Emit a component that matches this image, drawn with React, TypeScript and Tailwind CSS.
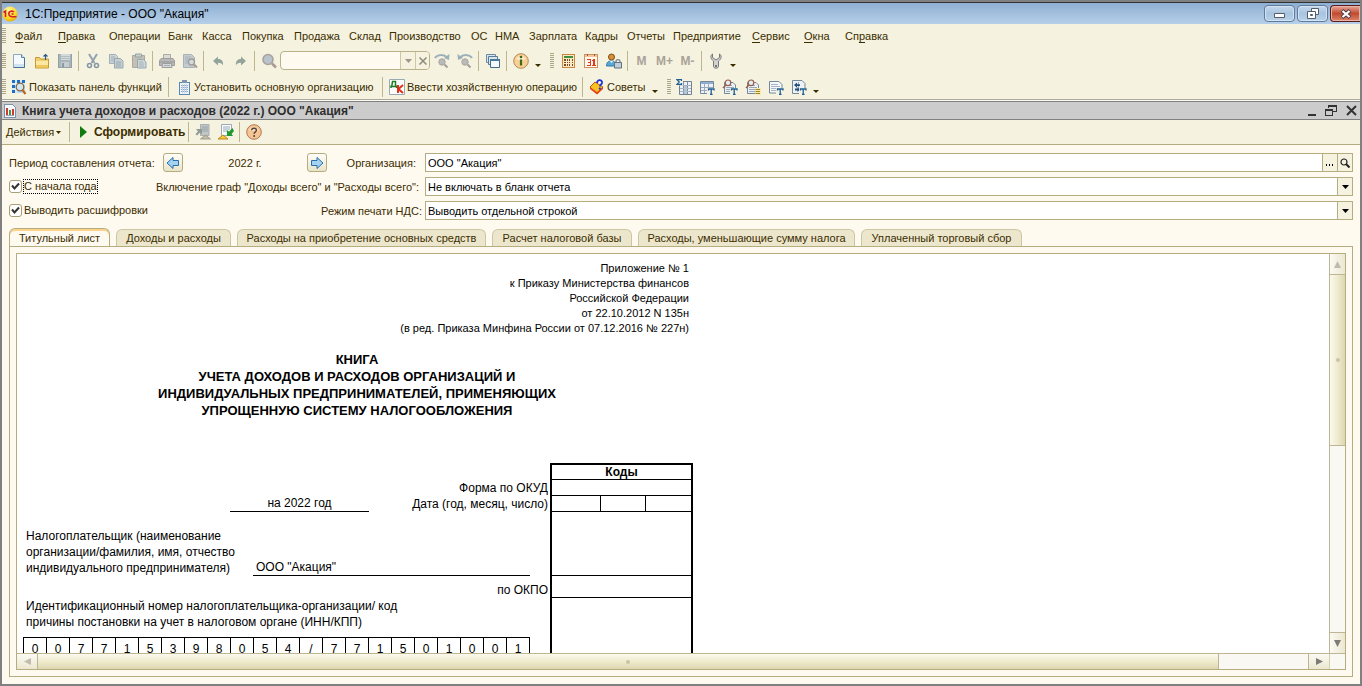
import React, { useState } from 'react';

const MENU = [
  { label: 'Файл', hot: 0, width: 'w-[43px]' },
  { label: 'Правка', hot: 0, width: 'w-[51px]' },
  { label: 'Операции', hot: -1, width: 'w-[59px]' },
  { label: 'Банк', hot: -1, width: 'w-[34px]' },
  { label: 'Касса', hot: -1, width: 'w-[40px]' },
  { label: 'Покупка', hot: -1, width: 'w-[52px]' },
  { label: 'Продажа', hot: -1, width: 'w-[55px]' },
  { label: 'Склад', hot: -1, width: 'w-[40px]' },
  { label: 'Производство', hot: -1, width: 'w-[82px]' },
  { label: 'ОС', hot: -1, width: 'w-[24px]' },
  { label: 'НМА', hot: -1, width: 'w-[34px]' },
  { label: 'Зарплата', hot: -1, width: 'w-[56px]' },
  { label: 'Кадры', hot: -1, width: 'w-[42px]' },
  { label: 'Отчеты', hot: -1, width: 'w-[46px]' },
  { label: 'Предприятие', hot: -1, width: 'w-[79px]' },
  { label: 'Сервис', hot: 0, width: 'w-[52px]' },
  { label: 'Окна', hot: 0, width: 'w-[41px]' },
  { label: 'Справка', hot: 2, width: 'w-[46px]' },
];

const TABS = [
  { label: 'Титульный лист', width: 'w-[101px]' },
  { label: 'Доходы и расходы', width: 'w-[115px]' },
  { label: 'Расходы на приобретение основных средств', width: 'w-[249px]' },
  { label: 'Расчет налоговой базы', width: 'w-[140px]' },
  { label: 'Расходы, уменьшающие сумму налога', width: 'w-[217px]' },
  { label: 'Уплаченный торговый сбор', width: 'w-[161px]' },
];

const INN_CELLS = '007715398054/771501001'.split('');

/* ---------- icons ---------- */

interface IconProps {
  children: React.ReactNode;
  crisp?: boolean;
}

const Icon: React.FC<IconProps> = ({ children, crisp }) => (
  <svg width="16" height="16" viewBox="0 0 16 16" fill="none" shapeRendering={crisp ? 'crispEdges' : 'auto'} className="shrink-0" aria-hidden="true">
    {children}
  </svg>
);

const LogoIcon = () => (
  <svg width="16" height="16" viewBox="0 0 16 16" aria-hidden="true" className="shrink-0">
    <defs>
      <radialGradient id="logo" cx="0.4" cy="0.25" r="0.8">
        <stop offset="0" stopColor="#fff7a0" />
        <stop offset="0.6" stopColor="#ffd92e" />
        <stop offset="1" stopColor="#e8a800" />
      </radialGradient>
    </defs>
    <circle cx="8" cy="8" r="7.5" fill="url(#logo)" />
    <path d="M1.5 6.5 3.5 5v6M11.8 6.200C11 4.600 6.800 4.600 6.800 7.800c0 3 2.700 3 7.700 3M11.500 8H9.500" stroke="#d8201c" strokeWidth="1.6" fill="none" />
  </svg>
);

const NewIcon = () => (
  <Icon>
    <path d="M2.5 1.5h8l3 3v10h-11z" fill="#f3f9fd" stroke="#8fa9c0" />
    <path d="M3 11h10v3H3z" fill="#cfe3f1" />
    <path d="M10.5 1.5v3h3" stroke="#5b86a8" fill="#d5e8f5" />
    <path d="M13.5 5v9.5h-11" stroke="#47739a" />
  </Icon>
);

const OpenIcon = () => (
  <Icon>
    <path d="M1.5 4.5h4l1 1.5h8v9h-13z" fill="#f2cf6a" stroke="#c89a35" />
    <path d="M2 8h12v6H2z" fill="#fce8a0" />
    <path d="M2 12h12v2.5H2z" fill="#f0c75c" />
    <path d="M11.5 7V1.5M9.5 3.5l2-2 2 2" stroke="#2c5d86" strokeWidth="1.2" />
  </Icon>
);

const SaveIcon = () => (
  <Icon crisp>
    <path d="M1 1h14v14H1z" fill="#a9b4b9" />
    <path d="M4 1h9v6H4z" fill="#d3dadb" />
    <path d="M4 3h9v1H4zM4 5h9v1H4z" fill="#b4bec2" />
    <path d="M4 9h8v6H4z" fill="#c5cdd0" />
    <path d="M5 10h2v4H5z" fill="#8999a1" />
    <path d="M1 1h1v14H1zM14 1h1v14h-1zM1 14h14v1H1z" fill="#93a1a8" />
  </Icon>
);

const CutIcon = () => (
  <Icon>
    <path d="M4 1l5.5 9M12 1 6.5 10" stroke="#93a3ae" strokeWidth="2" />
    <circle cx="4.500" cy="12.500" r="2" stroke="#8496a5" strokeWidth="1.5" />
    <circle cx="11.500" cy="12.500" r="2" stroke="#8496a5" strokeWidth="1.5" />
  </Icon>
);

const CopyIcon = () => (
  <Icon>
    <path d="M1.5 1.5h6l2 2v7h-8z" fill="#ccd5d8" stroke="#a1afb6" />
    <path d="M3 4h4M3 6h5M3 8h5" stroke="#a1afb6" />
    <path d="M6.5 5.5h6l2.5 2.5v7H6.5z" fill="#c5cfd4" stroke="#98a8b1" />
    <path d="M8 9h5M8 11h5M8 13h5" stroke="#98a8b1" />
  </Icon>
);

const PasteIcon = () => (
  <Icon>
    <path d="M1.5 2.500h12v12h-12z" fill="#c4c0b5" stroke="#aba89c" />
    <path d="M4.500 1h6v3h-6z" fill="#c9cfcf" stroke="#98a3a6" />
    <path d="M6.500 6.500h6l2.500 2.500v6H6.500z" fill="#ccd5d8" stroke="#98a8b1" />
    <path d="M8 9h4M8 11h5M8 13h5" stroke="#a6b4bb" />
  </Icon>
);

const PrintIcon = () => (
  <Icon>
    <path d="M4.500 1.500h7v4h-7z" fill="#dcdcd4" stroke="#aaaaa6" />
    <path d="M2 5.500h12l1.500 2v5H.5v-5z" fill="#bab8b4" stroke="#9f9ea2" />
    <path d="M1 9h14" stroke="#96969b" />
    <path d="M3.500 10.500h9l.5 4H3z" fill="#d5d8d6" stroke="#9a9fa2" />
    <path d="M5 12.500h6" stroke="#a8adb1" />
  </Icon>
);

const PreviewIcon = () => (
  <Icon>
    <path d="M1.500 1.500h8l3 3v10h-11z" fill="#c3ccd0" stroke="#a6b2b8" />
    <path d="M3 4h6M3 6h5M3 8h3M3 10h3" stroke="#a6b2b8" />
    <circle cx="9.500" cy="9" r="3" fill="#d3dadb" stroke="#a19b98" strokeWidth="1.300" />
    <path d="m12 11.500 3 3" stroke="#a89a94" strokeWidth="2" />
  </Icon>
);

const UndoIcon = () => (
  <Icon>
    <path d="M3 8 8 3.500V6c4 0 5.500 2.500 5 6.500-.8-2-2-2.800-5-2.800v2.800z" fill="#93a59a" />
  </Icon>
);

const RedoIcon = () => (
  <Icon>
    <path d="M13 8 8 3.500V6c-4 0-5.500 2.500-5 6.500.8-2 2-2.800 5-2.800v2.800z" fill="#93a59a" />
  </Icon>
);

const FindIcon = () => (
  <Icon>
    <circle cx="7" cy="6.500" r="5" fill="#b9c3cc" stroke="#a8a19d" strokeWidth="1.600" />
    <path d="m11 10.500 4 4" stroke="#aa9a94" strokeWidth="2.600" />
  </Icon>
);

const FindNextIcon = () => (
  <Icon>
    <path d="M1 5c2-3.500 9-4 12-.5" stroke="#9db0ba" strokeWidth="2" />
    <path d="m15.500 1-.5 6-5-2z" fill="#9db0ba" />
    <circle cx="8" cy="9" r="3.200" fill="#bababa" stroke="#a9a5a3" />
    <path d="m10.500 11.500 3 3" stroke="#a79d98" strokeWidth="2" />
  </Icon>
);

const FindPrevIcon = () => (
  <Icon>
    <path d="M15 5C13 1.500 6 1 3 4.500" stroke="#9db0ba" strokeWidth="2" />
    <path d="m.5 1 .5 6 5-2z" fill="#9db0ba" />
    <circle cx="8" cy="9" r="3.200" fill="#bababa" stroke="#a9a5a3" />
    <path d="m10.500 11.500 3 3" stroke="#a79d98" strokeWidth="2" />
  </Icon>
);

const WindowsIcon = () => (
  <Icon>
    <path d="M1.500 1.500h9v8h-9z" fill="#d9e6ee" stroke="#6c8ba3" />
    <path d="M3.500 3.500h9v8h-9z" fill="#d9e6ee" stroke="#567c98" />
    <path d="M5.500 6.500h9v8h-9z" fill="#f4f9fc" stroke="#3f6c8c" />
    <path d="M5 7h10" stroke="#4a7898" strokeWidth="2" />
  </Icon>
);

const InfoIcon = () => (
  <Icon>
    <circle cx="8" cy="8" r="7.300" fill="#f8cf94" stroke="#b58a58" />
    <path d="M3 6a5.500 4.500 0 0 1 10 0c-3 1.500-7 1.500-10 0z" fill="#fdebd0" />
    <circle cx="8" cy="4" r="1.300" fill="#3b6b14" />
    <path d="M8 6.500v6" stroke="#3b6b14" strokeWidth="2.200" />
  </Icon>
);

const HelpIcon = () => (
  <Icon>
    <circle cx="8" cy="8" r="7.300" fill="#f6c596" stroke="#b07850" />
    <path d="M3 6a5.500 4.500 0 0 1 10 0c-3 1.500-7 1.500-10 0z" fill="#fde3c8" />
    <path d="M5.700 6.200C5.700 3.500 10.400 3.500 10.400 6.200c0 1.600-2.300 1.600-2.300 3.500" stroke="#5a463a" strokeWidth="1.500" />
    <circle cx="8.100" cy="12" r="1" fill="#5a463a" />
  </Icon>
);

const CalcIcon = () => (
  <Icon crisp>
    <path d="M2.500 1.500h12v13h-12z" fill="#fbe8c4" stroke="#c8873e" />
    <path d="M4 3h9v2H4z" fill="#3f8f3c" />
    <path d="M4 6h2v2H4zM7 6h1v2H7zM9 6h1v2H9zM12 6h1v2h-1zM4 9h2v1H4zM7 9h1v1H7zM9 9h1v1H9zM12 9h1v1h-1zM4 11h2v2H4zM7 11h1v2H7zM9 11h1v2H9zM12 11h1v2h-1z" fill="#7a4b20" />
  </Icon>
);

const CalendarIcon = () => (
  <Icon crisp>
    <path d="M1.500 1.500h13v13h-13z" fill="#fff8ee" stroke="#cf9060" />
    <path d="M2 2h12v2H2z" fill="#f4c69a" />
    <path d="M4 1h1v2H4zM11 1h1v2h-1z" fill="#8a5a34" />
    <path d="M4 6h4v7H4v-1h3v-2H5V9h2V7H4zM10 6h2v6h1v1H9v-1h1V8H9V7h1z" fill="#e23a1c" />
  </Icon>
);

const UserIcon = () => (
  <Icon>
    <circle cx="5.500" cy="4" r="3" fill="#d99036" stroke="#7c4c1c" />
    <path d="M.5 13c0-4 2-5 5-5s4 1 4.500 5z" fill="#58a9d8" stroke="#2f79a8" />
    <path d="m4 8 1.500 2L7 8z" fill="#fff" />
    <path d="M10 10V8.500c0-2.500 4-2.500 4 0V10" stroke="#76858f" strokeWidth="1.300" />
    <path d="M8.500 9.500h7v5.500h-7z" fill="#c4ced6" stroke="#5f7280" />
  </Icon>
);

const WrenchIcon = () => (
  <Icon>
    <path d="M4.500 1v3.500L8 7l3.500-2.500V1C14 2.500 13.500 6 10.500 8v5.500c0 2.200-5 2.200-5 0V8C2.500 6 2 2.500 4.500 1z" fill="#d2d2d0" stroke="#77777a" />
    <circle cx="8" cy="13" r="1" fill="#555" />
  </Icon>
);

const PanelIcon = () => (
  <Icon>
    <path d="M1 1h13v13H1z" fill="#bcdcf5" />
    <path d="M1 1h3v3H1zM6 1h3v3H6zM11 1h3v3h-3zM1 6h3v3H1zM1 11h3v3H1z" fill="#1c6fc4" />
    <path d="M1 5h13M1 10h5M5 1v13M10 1v4" stroke="#f3f9ff" />
    <circle cx="9" cy="8" r="3.800" fill="#cfe6ee" stroke="#8a6440" strokeWidth="1.300" />
    <path d="m11.500 11 3 4" stroke="#b86a20" strokeWidth="2.200" />
  </Icon>
);

const OrgIcon = () => (
  <Icon crisp>
    <path d="M3 3h11v13H3z" fill="#5f86ad" />
    <path d="M4 4h9v11H4z" fill="#eef4fb" />
    <path d="M6 1h5v3H6z" fill="#7d96ae" />
    <path d="M5 6h7v1H5zM5 8h7v1H5zM5 10h7v1H5zM5 12h7v1H5z" fill="#8eaac6" />
    <path d="M6 5h1v9H6zM8 5h1v9H8zM10 5h1v9h-1z" fill="#c3d3e4" />
  </Icon>
);

const DkIcon = () => (
  <Icon>
    <path d="M.5.5h15v15H.5z" fill="#fff" stroke="#9aa9b5" />
    <path d="M2 9V7.200h.8L3.500 2.500h3v4.700h1V9M2 7.500h5.500" stroke="#1d7d27" strokeWidth="1.500" />
    <path d="M9 6v8M14 6l-4.500 4L14 14" stroke="#e3301c" strokeWidth="2" />
  </Icon>
);

const TipsIcon = () => (
  <Icon>
    <path d="M1 8 6 3l8 5-6 7z" fill="#f7c222" stroke="#b8590e" />
    <path d="m1 8 7 5v2.500L1 10zM8 13l6-5v2l-6 5.500z" fill="#e2471c" />
    <path d="M8 4c0-4 5.500-3.500 5 0-.3 1.500-2 1.500-2 3.500" stroke="#1a30d8" strokeWidth="1.800" />
    <circle cx="10.800" cy="9.600" r="1.100" fill="#1a30d8" />
  </Icon>
);

const SheetBase = () => (
  <>
    <path d="M2.500 3.500h8.500l2.500 2.500v8.500h-11z" fill="#eef2f6" stroke="#75879b" />
    <path d="M4 6.500h6M4 8.500h8M4 10.500h8M4 12.500h8" stroke="#9aa9ba" />
  </>
);

const LetterT = () => (
  <>
    <path d="M8 9h8v7H8z" fill="#f5f2df" />
    <path d="M9.500 11.500v-1.500h5.500v1.500M12.200 10v5.500M11 15.500h2.600" stroke="#1f5f96" strokeWidth="1.300" />
  </>
);

const Lens = () => (
  <>
    <circle cx="6" cy="3.800" r="2.800" fill="#e3eff5" stroke="#9a5c46" strokeWidth="1.200" />
    <path d="M4 6 1 9" stroke="#9a5c46" strokeWidth="1.500" />
  </>
);

const SumIcon = () => (
  <Icon>
    <path d="M3.500 2.500h12v13h-12z" fill="#eef2f6" stroke="#6f8296" />
    <path d="M7.500 3v12M11.500 3v12" stroke="#7f92a6" />
    <path d="M4 6.500h11M4 9.500h11M4 12.500h11" stroke="#a5b3c2" />
    <path d="M8 7h3v8H8z" fill="#b7c4d2" />
    <path d="M0 0h7v6.500H0z" fill="#f5f2df" />
    <path d="M5.500 2V.6H1L3.300 3 1 5.400h4.500V4" stroke="#1f5f96" strokeWidth="1.200" />
  </Icon>
);

const TableTIcon = () => (
  <Icon>
    <path d="M1.500 2.500h13v12h-13z" fill="#eef2f6" stroke="#75879b" />
    <path d="M2 4h12" stroke="#8fb0d0" strokeWidth="2" />
    <path d="M5.500 4v10M9.500 4v10M2 8.500h12M2 11.500h12" stroke="#9aa9ba" />
    <LetterT />
  </Icon>
);

const LensTIcon = () => (
  <Icon>
    <SheetBase />
    <Lens />
    <LetterT />
  </Icon>
);

const LensListIcon = () => (
  <Icon>
    <SheetBase />
    <Lens />
    <path d="M10 9h6v7h-6z" fill="#f5e9b0" />
    <path d="M10.500 10.500H15M10.500 12.500H15M10.500 14.500H15" stroke="#a08a20" />
  </Icon>
);

const TextTIcon = () => (
  <Icon>
    <path d="M1.500 2.500h9.500l3 3v8.500h-12.500z" fill="#f6f8fa" stroke="#75879b" />
    <path d="M3 5.500h7M3 7.500h9M3 9.500h6M3 11.500h5" stroke="#a9b5c2" />
    <LetterT />
  </Icon>
);

const ArrowsTIcon = () => (
  <Icon>
    <path d="M1.500 1.500h9.500l3 3v10h-12.500z" fill="#eef2f6" stroke="#75879b" />
    <path d="M7.500 3v9" stroke="#9aa9ba" />
    <path d="m3 6 3-2.500v1.700h3V7H6v1.700zM9 10.500 6.500 8v1.500H4v2h2.500V13z" fill="#1f4f7c" />
    <LetterT />
  </Icon>
);

const ReportIcon = () => (
  <svg width="12" height="14" viewBox="0 0 12 14" shapeRendering="crispEdges" className="shrink-0" aria-hidden="true">
    <path d="M.5.5h8l3 3v10H.5z" fill="#f4f8fb" stroke="#7e93a8" />
    <path d="M2 4h2v7H2z" fill="#cc3a30" />
    <path d="M5 6h2v5H5z" fill="#3f9a48" />
    <path d="M8 5h2v6H8z" fill="#cc3a30" />
    <path d="M2 11h8v1H2z" fill="#9aa6b2" />
  </svg>
);

const RestoreSettingsIcon = () => (
  <Icon>
    <path d="M5.500.5h8.500v11H5.500z" fill="#c2c7c7" stroke="#a8afb1" />
    <path d="M7 3h6M7 5h6M7 7h6" stroke="#98a2a6" />
    <path d="M1 5h6v5.500L5 8.500l-3 3L.500 10 3 7.500z" fill="#8f9b93" />
    <path d="m5.500 15 5-4 5 4z" fill="#c3bda8" stroke="#a29d8b" />
  </Icon>
);

const SaveSettingsIcon = () => (
  <Icon>
    <path d="M3.500.5h10v11h-10z" fill="#fafcfd" stroke="#9aaab8" />
    <path d="M5 3h7M5 5h7M5 7h4" stroke="#98a8b6" />
    <path d="M14.500 4 11 7.500 9 6v6h6l-1.500-2 2.500-3z" fill="#1f9a2c" />
    <path d="m0 15 5-4 5 4z" fill="#f5c93a" stroke="#b98a1c" />
  </Icon>
);

const ArrowLeftIcon = () => (
  <svg width="14" height="14" viewBox="0 0 14 14" aria-hidden="true">
    <path d="M1 7 7 1.500v3h5.500v5H7v3z" fill="#a4d2f2" stroke="#2b6ea8" strokeLinejoin="round" />
  </svg>
);

const ArrowRightIcon = () => (
  <svg width="14" height="14" viewBox="0 0 14 14" aria-hidden="true">
    <path d="M13 7 7 1.500v3H1.500v5H7v3z" fill="#a4d2f2" stroke="#2b6ea8" strokeLinejoin="round" />
  </svg>
);

const SmallArrow: React.FC<{ className?: string }> = ({ className = 'text-black' }) => (
  <svg width="7" height="4" viewBox="0 0 7 4" className={`shrink-0 ${className}`} aria-hidden="true">
    <path d="M0 0h7L3.500 4z" fill="currentColor" />
  </svg>
);

/* ---------- toolbar parts ---------- */

const Separator = () => (
  <div className="w-[5px] flex justify-center shrink-0">
    <div className="w-px h-5 bg-[#bdb68e]" />
  </div>
);

const Grip = () => (
  <div className="w-1 h-4 shrink-0 bg-[repeating-linear-gradient(#aaa687_0_1px,transparent_1px_2px)]" />
);

const More = () => (
  <button type="button" aria-label="Еще" className="w-3 h-5 flex items-end justify-center pb-1 shrink-0">
    <svg width="6" height="3" viewBox="0 0 6 3" aria-hidden="true"><path d="M0 0h6L3 3z" fill="#3b2d00" /></svg>
  </button>
);

const ToolButton: React.FC<{ title: string; children: React.ReactNode; disabled?: boolean }> = ({ title, children, disabled }) => (
  <button type="button" title={title} aria-label={title} disabled={disabled} className="w-[23px] h-6 flex items-center justify-center shrink-0">
    {children}
  </button>
);

const MemoryButton: React.FC<{ label: string }> = ({ label }) => (
  <button type="button" disabled className="w-[23px] h-6 text-xs font-bold text-[#a9a298] shrink-0 whitespace-nowrap">{label}</button>
);

const TextButton: React.FC<{ label: string; width: string; children: React.ReactNode }> = ({ label, width, children }) => (
  <button type="button" className={`${width} h-6 flex items-center gap-[2px] shrink-0 whitespace-nowrap`}>
    {children}
    {label}
  </button>
);

const TitleBar = () => (
  <header className="h-[22px] border-t border-[#333] bg-linear-to-b from-[#8fafd1] to-[#b6cfe9] flex items-center">
    <LogoIcon />
    <h1 className="ml-[7px] text-xs text-black flex-1 whitespace-nowrap">1С:Предприятие - ООО "Акация"</h1>
    <div className="flex gap-[2px]">
      <button type="button" aria-label="Свернуть" className="w-[31px] h-[17px] rounded-sm border border-[#5f7a9c] bg-linear-to-b from-[#c5d8ec] via-[#a9c4df] to-[#b9d2ea] flex items-center justify-center shadow-[inset_0_0_0_1px_#d5e4f3]">
        <svg width="11" height="5" viewBox="0 0 11 5" className="mt-1"><path d="M.5.5h10v4H.5z" fill="#fff" stroke="#555c6b" /></svg>
      </button>
      <button type="button" aria-label="Восстановить" className="w-[31px] h-[17px] rounded-sm border border-[#5f7a9c] bg-linear-to-b from-[#c5d8ec] via-[#a9c4df] to-[#b9d2ea] flex items-center justify-center shadow-[inset_0_0_0_1px_#d5e4f3]">
        <svg width="12" height="11" viewBox="0 0 12 11">
          <path d="M4.500.5h7v6h-7z" fill="#fff" stroke="#555c6b" />
          <path d="M.5 3.500h8v7h-8z" fill="#fff" stroke="#555c6b" />
          <path d="M3.500 6.500h2v1h-2z" fill="#7791ae" stroke="#555c6b" />
        </svg>
      </button>
      <button type="button" aria-label="Закрыть" className="w-[30px] h-[17px] rounded-l-sm border border-r-0 border-[#5c1a18] bg-linear-to-b from-[#e6a699] via-[#c04a30] to-[#dd8468] flex items-center justify-center shadow-[inset_0_0_0_1px_#e9b4a8]">
        <svg width="12" height="10" viewBox="0 0 12 10">
          <path d="M2 1.500 10 8.500M10 1.500 2 8.500" stroke="#4f3a42" strokeWidth="4" />
          <path d="M2.500 2 9.500 8M9.500 2 2.500 8" stroke="#fff" strokeWidth="2.200" />
        </svg>
      </button>
    </div>
  </header>
);

const MenuBar = () => (
  <nav className="h-6 flex items-center">
    <Grip />
    <div className="flex pl-[9px]">
      {MENU.map(({ label, hot, width }) => (
        <button key={label} type="button" className={`${width} text-left whitespace-nowrap`}>
          {hot < 0 ? label : (
            <>
              {label.slice(0, hot)}
              <u className="underline-offset-2">{label[hot]}</u>
              {label.slice(hot + 1)}
            </>
          )}
        </button>
      ))}
    </div>
  </nav>
);

const MainToolbar = () => (
  <div className="h-[25px] flex items-center">
    <Grip />
    <div className="w-px" />
    <ToolButton title="Новый"><NewIcon /></ToolButton>
    <ToolButton title="Открыть"><OpenIcon /></ToolButton>
    <ToolButton title="Сохранить" disabled><SaveIcon /></ToolButton>
    <Separator />
    <ToolButton title="Вырезать" disabled><CutIcon /></ToolButton>
    <ToolButton title="Копировать" disabled><CopyIcon /></ToolButton>
    <ToolButton title="Вставить" disabled><PasteIcon /></ToolButton>
    <Separator />
    <ToolButton title="Печать" disabled><PrintIcon /></ToolButton>
    <ToolButton title="Просмотр" disabled><PreviewIcon /></ToolButton>
    <Separator />
    <ToolButton title="Отменить" disabled><UndoIcon /></ToolButton>
    <ToolButton title="Повторить" disabled><RedoIcon /></ToolButton>
    <Separator />
    <ToolButton title="Найти" disabled><FindIcon /></ToolButton>
    <div className="w-[150px] h-[19px] flex border border-[#b9b18a] rounded-sm bg-[#fffaf0] overflow-hidden shrink-0">
      <input type="text" aria-label="Поиск" className="w-[119px] outline-none px-1" />
      <button type="button" aria-label="История поиска" className="w-[15px] border-l border-[#cdc7a4] bg-[#f5f2df] flex items-center justify-center">
        <SmallArrow className="text-[#9b9688]" />
      </button>
      <button type="button" aria-label="Очистить" className="w-[14px] border-l border-[#cdc7a4] bg-[#f5f2df] flex items-center justify-center">
        <svg width="8" height="8" viewBox="0 0 8 8"><path d="m.5.5 7 7M7.500.5l-7 7" stroke="#8f8a7a" strokeWidth="1.500" /></svg>
      </button>
    </div>
    <ToolButton title="Найти следующий" disabled><FindNextIcon /></ToolButton>
    <ToolButton title="Найти предыдущий" disabled><FindPrevIcon /></ToolButton>
    <Separator />
    <ToolButton title="Окна"><WindowsIcon /></ToolButton>
    <Separator />
    <ToolButton title="Справка"><InfoIcon /></ToolButton>
    <More />
    <div className="w-[6px]" />
    <Grip />
    <div className="w-[2px]" />
    <ToolButton title="Калькулятор"><CalcIcon /></ToolButton>
    <ToolButton title="Календарь"><CalendarIcon /></ToolButton>
    <ToolButton title="Пользователь"><UserIcon /></ToolButton>
    <Separator />
    <MemoryButton label="M" />
    <MemoryButton label="M+" />
    <MemoryButton label="M-" />
    <Separator />
    <ToolButton title="Настройки"><WrenchIcon /></ToolButton>
    <More />
  </div>
);

const CommandToolbar = () => (
  <div className="h-[26px] pt-px flex items-center">
    <Grip />
    <div className="w-[5px]" />
    <TextButton label="Показать панель функций" width="w-[155px]"><PanelIcon /></TextButton>
    <Separator />
    <div className="w-[5px]" />
    <TextButton label="Установить основную организацию" width="w-[204px]"><OrgIcon /></TextButton>
    <Separator />
    <div className="w-1" />
    <TextButton label="Ввести хозяйственную операцию" width="w-[191px]"><DkIcon /></TextButton>
    <Separator />
    <div className="w-1" />
    <TextButton label="Советы" width="w-[60px]"><TipsIcon /></TextButton>
    <More />
    <div className="w-[6px]" />
    <Grip />
    <div className="w-px" />
    <ToolButton title="Итоги"><SumIcon /></ToolButton>
    <ToolButton title="Таблица"><TableTIcon /></ToolButton>
    <ToolButton title="Найти текст"><LensTIcon /></ToolButton>
    <ToolButton title="Найти в списке"><LensListIcon /></ToolButton>
    <ToolButton title="Текст"><TextTIcon /></ToolButton>
    <ToolButton title="Обмен"><ArrowsTIcon /></ToolButton>
    <More />
  </div>
);

const ReportTitle = () => (
  <div className="h-[19px] mt-px border-t border-b border-[#808080] bg-[#cccccc] flex items-center pl-[2px] pr-[3px] text-[#2e2e2e] shrink-0">
    <ReportIcon />
    <h2 className="ml-[6px] flex-1 text-xs font-bold whitespace-nowrap">Книга учета доходов и расходов (2022 г.) ООО "Акация"</h2>
    <div className="flex items-center gap-[9px]">
      <button type="button" aria-label="Свернуть окно">
        <svg width="9" height="11" viewBox="0 0 9 11"><path d="M1 9h8v2H1z" fill="#333" /></svg>
      </button>
      <button type="button" aria-label="Восстановить окно">
        <svg width="12" height="11" viewBox="0 0 12 11" fill="none" shapeRendering="crispEdges">
          <path d="M3.500 3V.5h8v6H8M3 1h9" stroke="#333" />
          <path d="M.5 4.500h7v6h-7zM0 5h8" stroke="#333" />
        </svg>
      </button>
      <button type="button" aria-label="Закрыть окно">
        <svg width="11" height="11" viewBox="0 0 11 11"><path d="m1 1 9 9M10 1l-9 9" stroke="#333" strokeWidth="2" /></svg>
      </button>
    </div>
  </div>
);

const ReportToolbar = () => (
  <div className="h-[25px] border-b border-[#b5ac80] flex items-center bg-[#f5f2df] shrink-0">
    <button type="button" className="w-[65px] pl-1 flex items-center gap-[2px] whitespace-nowrap">
      Действия
      <svg width="5" height="3" viewBox="0 0 5 3" aria-hidden="true"><path d="M0 0h5L2.500 3z" fill="#3b2d00" /></svg>
    </button>
    <Separator />
    <button type="button" className="w-[114px] pl-2 flex items-center gap-[7px] text-xs font-bold whitespace-nowrap">
      <svg width="7" height="12" viewBox="0 0 7 12" className="shrink-0" aria-hidden="true"><path d="M0 0v12l7-6z" fill="#107c10" /></svg>
      Сформировать
    </button>
    <Separator />
    <ToolButton title="Восстановить настройки" disabled><RestoreSettingsIcon /></ToolButton>
    <ToolButton title="Сохранить настройки"><SaveSettingsIcon /></ToolButton>
    <Separator />
    <ToolButton title="Помощь"><HelpIcon /></ToolButton>
  </div>
);

/* ---------- form ---------- */

const PeriodButton: React.FC<{ title: string; onClick: () => void; children: React.ReactNode }> = ({ title, onClick, children }) => (
  <button
    type="button"
    aria-label={title}
    onClick={onClick}
    className="w-5 h-[19px] rounded-[3px] border border-[#b5ac80] bg-linear-to-b from-[#fffef8] to-[#e9e4c8] flex items-center justify-center"
  >
    {children}
  </button>
);

const CheckField: React.FC<{ id: string; label: string; focused?: boolean }> = ({ id, label, focused }) => {
  const [checked, setChecked] = useState(true);
  return (
    <div className="flex items-center gap-px">
      <span className="grid place-items-center">
        <input
          id={id}
          type="checkbox"
          checked={checked}
          onChange={(e) => setChecked(e.target.checked)}
          className="appearance-none w-[13px] h-[13px] border border-[#a99f74] rounded-[3px] bg-white col-start-1 row-start-1"
        />
        {checked && (
          <svg width="9" height="9" viewBox="0 0 9 9" fill="none" className="col-start-1 row-start-1 pointer-events-none" aria-hidden="true">
            <path d="M1 3.500 3.500 6.500 8 1.500" stroke="#333" strokeWidth="2" />
          </svg>
        )}
      </span>
      <label htmlFor={id} className={`border leading-[13px] whitespace-nowrap ${focused ? 'border-dotted border-black' : 'border-transparent'}`}>{label}</label>
    </div>
  );
};

const SelectField: React.FC<{ id: string; options: string[] }> = ({ id, options }) => (
  <div className="h-[19px] flex-1 grid border border-[#b5ac80] bg-white text-black">
    <select id={id} className="appearance-none col-start-1 row-start-1 px-[2px] outline-none">
      {options.map((option) => <option key={option}>{option}</option>)}
    </select>
    <span className="col-start-1 row-start-1 justify-self-end w-[15px] border-l border-[#b5ac80] bg-[#f5f2df] flex items-center justify-center pointer-events-none">
      <SmallArrow />
    </span>
  </div>
);

const ReportForm = () => {
  const [year, setYear] = useState(2022);
  const [company, setCompany] = useState('ООО "Акация"');

  return (
    <form className="px-[7px] pt-2 flex flex-col gap-[5px]" onSubmit={(e) => e.preventDefault()}>
      <div className="flex items-center">
        <div className="w-[416px] flex items-center shrink-0">
          <span className="w-[154px] whitespace-nowrap">Период составления отчета:</span>
          <PeriodButton title="Предыдущий год" onClick={() => setYear(year - 1)}><ArrowLeftIcon /></PeriodButton>
          <output className="w-[124px] text-center">{year} г.</output>
          <PeriodButton title="Следующий год" onClick={() => setYear(year + 1)}><ArrowRightIcon /></PeriodButton>
          <label htmlFor="company" className="ml-auto pr-[9px]">Организация:</label>
        </div>
        <div className="h-[19px] flex-1 flex border border-[#b5ac80] bg-white text-black">
          <input id="company" type="text" value={company} onChange={(e) => setCompany(e.target.value)} className="flex-1 min-w-0 px-[2px] outline-none" />
          <button type="button" aria-label="Выбрать" className="w-[15px] border-l border-[#b5ac80] bg-[#f5f2df] flex items-center justify-center">
            <svg width="8" height="6" viewBox="0 0 8 6" shapeRendering="crispEdges"><path d="M0 4h1v2H0zM3 4h1v2H3zM6 4h1v2H6z" fill="#000" /></svg>
          </button>
          <button type="button" aria-label="Открыть" className="w-[15px] border-l border-[#b5ac80] bg-[#f5f2df] flex items-center justify-center">
            <svg width="10" height="10" viewBox="0 0 10 10" fill="none">
              <circle cx="4" cy="4" r="3" stroke="#222" strokeWidth="1.200" />
              <path d="m6 6 3.500 3.500" stroke="#222" strokeWidth="2" />
            </svg>
          </button>
        </div>
      </div>
      <div className="flex items-center">
        <div className="w-[416px] flex items-center justify-between pr-[6px] shrink-0">
          <CheckField id="from-start" label="С начала года" focused />
          <label htmlFor="columns" className="whitespace-nowrap">Включение граф "Доходы всего" и "Расходы всего":</label>
        </div>
        <SelectField id="columns" options={['Не включать в бланк отчета', 'Включать в бланк отчета']} />
      </div>
      <div className="flex items-center">
        <div className="w-[416px] flex items-center justify-between pr-[3px] shrink-0">
          <CheckField id="details" label="Выводить расшифровки" />
          <label htmlFor="vat" className="whitespace-nowrap">Режим печати НДС:</label>
        </div>
        <SelectField id="vat" options={['Выводить отдельной строкой', 'Не выводить']} />
      </div>
    </form>
  );
};

/* ---------- printed sheet ---------- */

const Sheet = () => (
  <article className="w-[676px] text-xs leading-4 text-black">
    <div className="pt-[7px] pr-1 text-right text-[11px] leading-[15px]">
      <p>Приложение № 1</p>
      <p>к Приказу Министерства финансов</p>
      <p>Российской Федерации</p>
      <p>от 22.10.2012 N 135н</p>
      <p>(в ред. Приказа Минфина России от 07.12.2016 № 227н)</p>
    </div>
    <h3 className="w-[680px] pt-[15px] text-center text-[13px] leading-[17px] font-bold">
      КНИГА<br />
      УЧЕТА ДОХОДОВ И РАСХОДОВ ОРГАНИЗАЦИЙ И<br />
      ИНДИВИДУАЛЬНЫХ ПРЕДПРИНИМАТЕЛЕЙ, ПРИМЕНЯЮЩИХ<br />
      УПРОЩЕННУЮ СИСТЕМУ НАЛОГООБЛОЖЕНИЯ
    </h3>
    <div className="mt-11 flex">
      <div className="w-[533px] pt-[17px]">
        <p className="pr-[2px] text-right">Форма по ОКУД</p>
        <div className="h-4 flex pl-[213px] pr-[2px] justify-between">
          <p className="w-[139px] leading-[15px] text-center border-b border-black">на 2022 год</p>
          <p>Дата (год, месяц, число)</p>
        </div>
        <div className="pt-4 pl-[9px] flex items-end">
          <p className="w-[227px]">
            Налогоплательщик (наименование<br />
            организации/фамилия, имя, отчество<br />
            индивидуального предпринимателя)
          </p>
          <p className="w-[277px] pl-[3px] leading-[15px] border-b border-black">ООО "Акация"</p>
        </div>
        <p className="pr-[2px] pt-[6px] text-right">по ОКПО</p>
        <p className="pl-[9px]">
          Идентификационный номер налогоплательщика-организации/ код<br />
          причины постановки на учет в налоговом органе (ИНН/КПП)
        </p>
        <table className="mt-[7px] ml-[6px] w-[507px] table-fixed border-collapse">
          <tbody>
            <tr className="h-[23px]">
              {INN_CELLS.map((cell, i) => (
                <td key={i} className="border border-black p-0 text-center">{cell}</td>
              ))}
            </tr>
          </tbody>
        </table>
      </div>
      <table className="w-[143px] table-fixed border-collapse border-2 border-black">
        <colgroup>
          <col className="w-[49px]" />
          <col className="w-[45px]" />
          <col />
        </colgroup>
        <thead>
          <tr className="h-[15px]">
            <th colSpan={3} className="p-0 leading-[14px] font-bold border border-black">Коды</th>
          </tr>
        </thead>
        <tbody>
          <tr className="h-4"><td colSpan={3} className="p-0 border border-black" /></tr>
          <tr className="h-4">
            <td className="p-0 border border-black" />
            <td className="p-0 border border-black" />
            <td className="p-0 border border-black" />
          </tr>
          <tr className="h-16"><td colSpan={3} className="p-0 border border-black" /></tr>
          <tr className="h-[22px]"><td colSpan={3} className="p-0 border border-black" /></tr>
          <tr><td colSpan={3} className="p-0 border border-black" /></tr>
        </tbody>
      </table>
    </div>
  </article>
);

const VerticalScroll = () => (
  <div className="w-4 border-l border-[#bdb594] bg-[#faf8f2] flex flex-col shrink-0">
    <button type="button" aria-label="Вверх" className="h-5 border-b border-[#bdb594] bg-linear-to-r from-[#fbfaf3] to-[#ebe7cf] flex items-center justify-center box-content">
      <svg width="7" height="7" viewBox="0 0 7 7"><path d="M3.500 0 7 7H0z" fill="#bfbcae" /></svg>
    </button>
    <div className="flex-1 flex flex-col">
      <div className="h-[48%] border-b border-[#bdb594] bg-linear-to-r from-[#fbf9ee] via-[#efebcd] to-[#ddd6b0] flex items-center justify-center">
        <span className="w-1 h-1 rounded-full bg-[#c9c3a5]" />
      </div>
    </div>
    <button type="button" aria-label="Вниз" className="h-5 border-t border-[#bdb594] bg-linear-to-r from-[#fbfaf3] to-[#ebe7cf] flex items-center justify-center box-content">
      <svg width="7" height="7" viewBox="0 0 7 7"><path d="M0 0h7L3.500 7z" fill="#7c7b76" /></svg>
    </button>
  </div>
);

const HorizontalScroll = () => (
  <div className="h-4 border-t border-[#bdb594] bg-[#faf8f2] flex shrink-0">
    <button type="button" aria-label="Влево" className="w-5 border-r border-[#bdb594] bg-linear-to-b from-[#fbfaf3] to-[#ebe7cf] flex items-center justify-center box-content">
      <svg width="7" height="7" viewBox="0 0 7 7"><path d="M7 0v7L0 3.500z" fill="#bfbcae" /></svg>
    </button>
    <div className="flex-1 flex">
      <div className="w-[93%] border-r border-[#bdb594] bg-linear-to-b from-[#fbf9ee] via-[#efebcd] to-[#ddd6b0] flex items-center justify-center">
        <span className="w-1 h-1 rounded-full bg-[#c9c3a5]" />
      </div>
    </div>
    <button type="button" aria-label="Вправо" className="w-5 border-l border-[#bdb594] bg-linear-to-b from-[#fbfaf3] to-[#ebe7cf] flex items-center justify-center box-content">
      <svg width="7" height="7" viewBox="0 0 7 7"><path d="M0 0v7l7-3.500z" fill="#7c7b76" /></svg>
    </button>
    <div className="w-4 border-l border-[#d5cfb2]" />
  </div>
);

const ReportTabs = () => {
  const [active, setActive] = useState(0);

  return (
    <section className="flex-1 min-h-0 px-[7px] pt-2 pb-[7px] flex flex-col">
      <div role="tablist" className="flex items-end gap-[6px] -mb-px">
        {TABS.map(({ label, width }, i) => (
          <button
            key={label}
            type="button"
            role="tab"
            aria-selected={i === active}
            onClick={() => setActive(i)}
            className={`${width} rounded-t-md border whitespace-nowrap ${
              i === active
                ? 'h-[19px] border-[#b5ac80] border-b-[#fffaf0] bg-[#fffaf0] shadow-[inset_0_2px_0_#fbd38a]'
                : 'h-[18px] border-[#cdc6a4] border-b-[#b5ac80] bg-[#ece6cd]'
            }`}
          >
            {label}
          </button>
        ))}
      </div>
      <div role="tabpanel" className="flex-1 min-h-0 border border-[#b5ac80] p-[6px] flex">
        <div className="flex-1 min-w-0 border border-[#b5ac80] bg-white flex flex-col">
          <div className="flex-1 min-h-0 flex">
            <div className="flex-1 min-w-0 overflow-hidden">
              <Sheet />
            </div>
            <VerticalScroll />
          </div>
          <HorizontalScroll />
        </div>
      </div>
    </section>
  );
};

const App: React.FC = () => (
  <div className="h-screen min-w-[900px] border-2 border-[#808080] bg-[#f5f2df] flex flex-col overflow-hidden font-['Liberation_Sans',Arial,sans-serif] text-[11px] leading-[14px] text-[#3b2d00]">
    <TitleBar />
    <MenuBar />
    <MainToolbar />
    <CommandToolbar />
    <main className="flex-1 min-h-0 border-t border-[#a9a9a0] flex flex-col bg-[#fffaf0]">
      <ReportTitle />
      <ReportToolbar />
      <ReportForm />
      <ReportTabs />
    </main>
  </div>
);

export default App;
